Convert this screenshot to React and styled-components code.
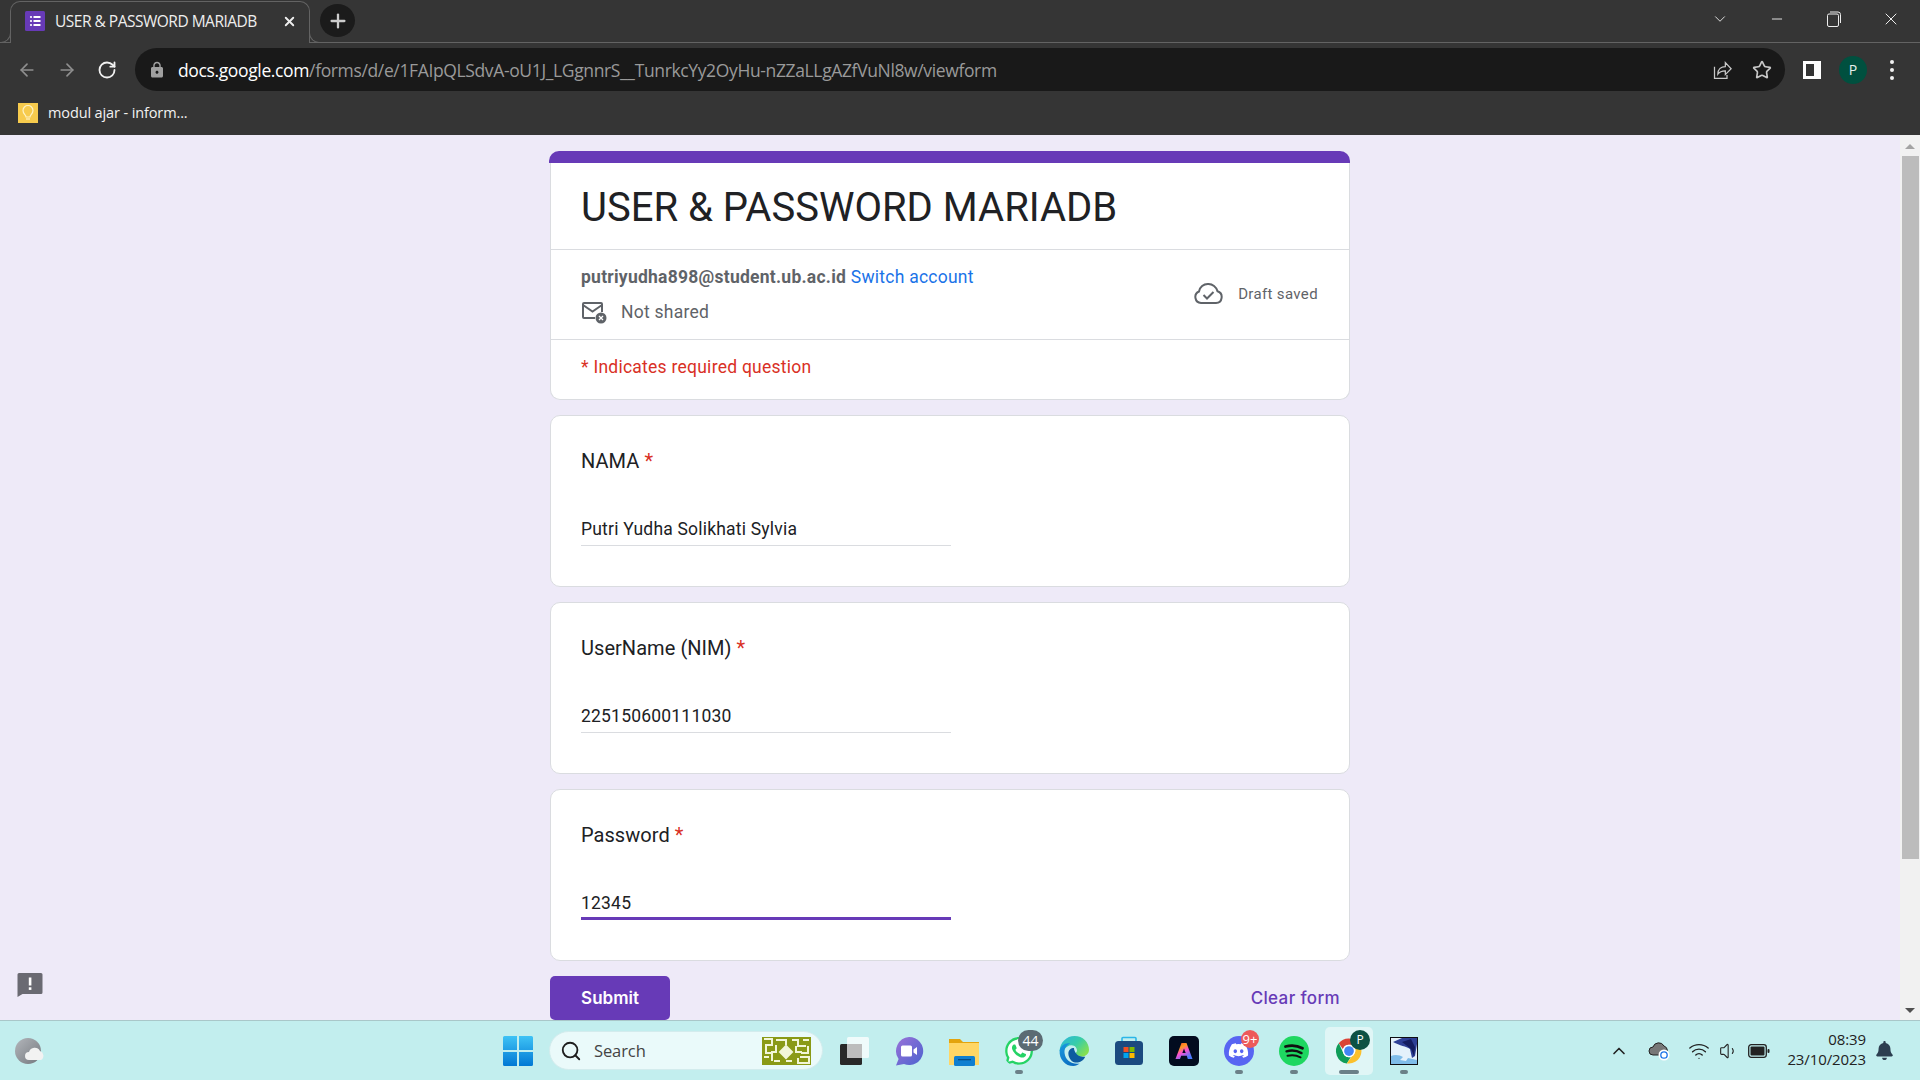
import React from "react";
import styled, { createGlobalStyle } from "styled-components";
import { ArrowLeft, ArrowRight, RotateCw, Star, ChevronDown, ChevronUp, Minus, X, Plus, Wifi, Volume1, Search } from "lucide-react";
import { MdLock } from "react-icons/md";
import { FaWhatsapp, FaDiscord, FaBell } from "react-icons/fa";

const GlobalStyle = createGlobalStyle`
  html, body { margin: 0; padding: 0; height: 100%; overflow: hidden; }
  #root { height: 100%; }
  * { box-sizing: border-box; }
`;

const UI = `"Open Sans", "Noto Sans", sans-serif`;
const FORM = `Roboto, "Liberation Sans", sans-serif`;

const Screen = styled.div`
  width: 1920px; height: 1080px; display: flex; flex-direction: column; overflow: hidden;
  font-family: ${FORM};
`;

/* ---------- browser chrome ---------- */
const Browser = styled.header`
  background: #353535; color: #fff; height: 135px; flex: none; display: flex; flex-direction: column;
  font-family: ${UI};
`;
const TabStrip = styled.div`
  height: 43px; flex: none; display: flex; align-items: flex-start; padding: 1px 0 0 10px;
  border-bottom: 1px solid #636363;
`;
const Tab = styled.div`
  position: relative; width: 300px; height: 42px; flex: none; display: flex; align-items: center;
  padding: 0 12px 3px 14px; background: #353535; border: 1px solid #636363; border-bottom: none;
  border-radius: 10px 10px 0 0;
  &::before, &::after {
    content: ""; position: absolute; bottom: 0; width: 10px; height: 10px; border-bottom: 1px solid #636363;
  }
  &::before { left: -11px; border-right: 1px solid #636363; border-bottom-right-radius: 10px; }
  &::after { right: -11px; border-left: 1px solid #636363; border-bottom-left-radius: 10px; }
`;
const Favicon = styled.svg`width: 20px; height: 20px; flex: none; margin-right: 10px;`;
const TabTitle = styled.span`
  flex: 1; font-size: 15.5px; letter-spacing: -0.5px; white-space: nowrap; color: #eee;
`;
const TabClose = styled(X)`width: 15px; height: 15px; color: #eee;`;
const NewTab = styled.div`
  width: 35px; height: 33px; margin: 3px 0 0 10px; border-radius: 50%; background: #1b1b1b;
  display: flex; align-items: center; justify-content: center; color: #ccc;
`;
const WindowControls = styled.div`
  margin-left: auto; display: flex; align-items: center; height: 36px; color: #eee; padding-right: 1px;
`;
const WindowButton = styled.div`
  width: ${p => p.$w || 57}px; display: flex; justify-content: center;
`;
const RestoreIcon = styled.svg`width: 14px; height: 16px;`;

const Toolbar = styled.div`
  height: 49px; flex: none; display: flex; align-items: center; padding: 4px 0 0 7px;
`;
const NavBtn = styled.div`
  width: 40px; display: flex; justify-content: center; color: ${p => (p.$on ? "#f1f1f1" : "#8f8f8f")};
`;
const Omnibox = styled.div`
  width: 1650px; height: 43px; margin-left: 8px; flex: none; background: #191919; border-radius: 22px;
  display: flex; align-items: center; padding: 0 13px 0 13px;
`;
const LockIcon = styled(MdLock)`width: 18px; height: 18px; color: #a0a0a0; margin-right: 12px;`;
const Url = styled.div`
  font-size: 17.5px; letter-spacing: -0.365px; white-space: nowrap; color: #9a9a9a; flex: 1;
  b { color: #fff; font-weight: 400; }
`;
const OmniIcons = styled.div`display: flex; align-items: center; gap: 20px; color: #c8c8c8;`;
const ToolRight = styled.div`display: flex; align-items: center; flex: 1; padding-left: 18px; gap: 0;`;
const SidePanel = styled.div`
  width: 18px; height: 18px; background: #fff; border: 3px solid #fff; border-right-width: 7px;
  box-shadow: inset 0 0 0 6px #353535;
`;
const Avatar = styled.div`
  width: 28px; height: 28px; border-radius: 50%; background: #00503f; color: #e8f0ee; margin-left: 18px;
  display: flex; align-items: center; justify-content: center; font-size: 14px;
`;
const Kebab = styled.div`
  display: flex; flex-direction: column; gap: 4px; margin-left: 23px;
  i { width: 4px; height: 4px; background: #f1f1f1; border-radius: 50%; display: block; }
`;
const Bookmarks = styled.div`
  flex: 1; display: flex; align-items: center; padding: 0 0 2px 18px; gap: 10px; font-size: 14.5px;
  letter-spacing: -0.12px; color: #f2f2f2;
`;
const BookmarkIcon = styled.div`
  width: 20px; height: 20px; background: #f7cb4d; display: flex; align-items: center; justify-content: center;
`;

/* ---------- page ---------- */
const Viewport = styled.main`
  position: relative; flex: 1; min-height: 0; display: flex; overflow: hidden; background: #eeeaf8;
`;
const Page = styled.div`
  flex: 1; overflow: hidden; display: flex; flex-direction: column; align-items: center; padding-top: 16px;
`;
const Column = styled.div`width: 800px; display: flex; flex-direction: column; gap: 15px; flex: none;`;
const HeaderCard = styled.section`
  background: #fff; border-radius: 10px; border: 1px solid #dadce0; border-top: none;
`;
const Accent = styled.div`height: 12px; background: #673ab7; margin: 0 -1px 0 -2px; border-radius: 10px 10px 0 0;`;
const TitleBlock = styled.div`padding: 20px 30px 16px; border-bottom: 1px solid #dadce0; height: 87px;`;
const FormTitle = styled.h1`
  margin: 0; font-size: 40px; line-height: 50px; font-weight: 400; color: #202124;
`;
const AccountBlock = styled.div`
  height: 90px; padding: 0 30px; border-bottom: 1px solid #dadce0; display: flex; align-items: center;
  justify-content: space-between;
`;
const AccountInfo = styled.div`
  display: flex; flex-direction: column; gap: 10px; font-size: 17.5px; color: #5f6368; letter-spacing: .25px;
`;
const Email = styled.div`
  line-height: 25px; b { font-weight: 700; color: #5f6368; } a { color: #1a73e8; text-decoration: none; }
`;
const NotShared = styled.div`display: flex; align-items: center; gap: 14px; line-height: 25px;`;
const MailIcon = styled.svg`width: 26px; height: 24px; flex: none;`;
const Draft = styled.div`
  display: flex; align-items: center; gap: 15px; font-size: 15px; color: #5f6368; padding: 0 1px 2px 0; letter-spacing: .35px;
`;
const CloudIcon = styled.svg`width: 30px; height: 21px; flex: none;`;
const RequiredNote = styled.div`
  height: 59px; padding: 15px 30px 0; font-size: 17.5px; line-height: 25px; color: #d93025; letter-spacing: .25px;
`;
const QuestionCard = styled.section`
  height: 172px; background: #fff; border: 1px solid #dadce0; border-radius: 10px; padding: 30px 30px 0;
`;
const Question = styled.div`
  font-size: 20px; line-height: 30px; color: #202124; letter-spacing: .05px;
  span { color: #d93025; margin-left: 5px; }
`;
const Answer = styled.div`
  margin-top: 35px; width: 370px; height: 35px; padding-top: 5px;
  font-size: 17.5px; line-height: 26px; color: #202124; letter-spacing: .2px;
  border-bottom: ${p => (p.$active ? "3px solid #673ab7" : "1.5px solid #dadce0")};
`;
const FormActions = styled.div`
  display: flex; justify-content: space-between; align-items: center; padding-right: 10px; height: 44px;
`;
const SubmitButton = styled.button`
  width: 120px; height: 44px; border: none; border-radius: 5px; background: #673ab7; color: #fff;
  font: 600 17px Inter, ${FORM}; padding: 0;
`;
const ClearLink = styled.a`color: #673ab7; font: 500 17px Inter, ${FORM}; letter-spacing: .35px;`;
const FeedbackIcon = styled.svg`position: absolute; left: 17px; bottom: 22px; width: 26px; height: 26px;`;

const Scrollbar = styled.aside`
  width: 20px; flex: none; background: #f1f1f1; display: flex; flex-direction: column; align-items: center;
  justify-content: space-between; padding: 9px 0 7px;
`;
const ScrollTop = styled.div`display: flex; flex-direction: column; align-items: center; gap: 7px;`;
const ArrowUp = styled.div`
  width: 0; height: 0; border-left: 5px solid transparent; border-right: 5px solid transparent;
  border-bottom: 5px solid #a3a3a3;
`;
const ArrowDown = styled.div`
  width: 0; height: 0; border-left: 5px solid transparent; border-right: 5px solid transparent;
  border-top: 5px solid #505050;
`;
const Thumb = styled.div`width: 17px; height: 703px; background: #bcbcbc;`;

/* ---------- taskbar ---------- */
const Taskbar = styled.footer`
  height: 60px; flex: none; background: #c2eeee; border-top: 1px solid #a9c7c9; display: flex; align-items: center;
  padding-left: 15px; font-family: ${UI}; position: relative;
`;
const Weather = styled.svg`width: 30px; height: 30px; flex: none;`;
const StartLogo = styled.svg`width: 30px; height: 30px; flex: none; margin-left: 458px;`;
const SearchPill = styled.div`
  width: 274px; height: 39px; margin: 0 3px 0 16px; flex: none; border-radius: 20px; background: #eafafa;
  border: 1px solid #d3eced; display: flex; align-items: center; padding: 0 10px 0 10px; color: #444;
  font-size: 16.5px; gap: 12px; letter-spacing: -.1px;
`;
const SearchGlyph = styled(Search)`width: 22px; height: 22px; color: #1e1e1e;`;
const SearchText = styled.span`flex: 1;`;
const Doodle = styled.svg`width: 49px; height: 28px; flex: none; margin-right: 1px;`;
const Cell = styled.div`
  position: relative; width: 55px; height: 58px; flex: none; display: flex; align-items: center; justify-content: center;
`;
const ActiveBack = styled.div`
  position: absolute; left: 4px; top: 5px; width: 48px; height: 48px; border-radius: 5px; background: #e0f6f6;
`;
const Run = styled.div`
  position: absolute; bottom: 6px; left: 50%; transform: translateX(-50%); height: 4px; border-radius: 2px;
  width: ${p => (p.$wide ? 20 : 8)}px; background: #6b8088;
`;
const Badge = styled.div`
  position: absolute; top: ${p => p.$t}px; left: ${p => p.$l}px; height: ${p => p.$s}px; min-width: ${p => p.$w}px;
  border-radius: ${p => p.$s}px; background: ${p => p.$c}; color: #fff; font-size: ${p => p.$f}px; line-height: ${p => p.$s}px;
  text-align: center;
`;
const Tray = styled.div`
  margin-left: auto; display: flex; align-items: center; height: 100%; color: #222; padding-right: 27px;
`;
const TrayItem = styled.div`
  width: ${p => p.$w}px; display: flex; justify-content: center; flex: none;
`;
const Clock = styled.div`
  width: 87px; margin-top: -3px; flex: none; text-align: right; font-size: 15px; line-height: 20px; color: #222; letter-spacing: -.1px; white-space: nowrap;
`;
const Bell = styled(FaBell)`width: 17px; height: 19px; color: #2c3e50; margin-left: 10px;`;

const Svg30 = styled.svg`width: 30px; height: 30px; position: relative;`;
const Brand = styled.div`
  position: relative; width: 30px; height: 30px; border-radius: ${p => p.$r || "50%"}; background: ${p => p.$bg};
  display: flex; align-items: center; justify-content: center; color: #fff;
`;
const WhatsOuter = styled(FaWhatsapp)`width: 32px; height: 32px; color: #25d366; background: radial-gradient(circle, #fff 60%, transparent 62%); border-radius: 50%;`;

const questions = [
  { label: "NAMA", value: "Putri Yudha Solikhati Sylvia" },
  { label: "UserName (NIM)", value: "225150600111030" },
  { label: "Password", value: "12345", active: true },
];

const Forms = () => (
  <Favicon viewBox="0 0 20 20">
    <rect width="20" height="20" rx="1.5" fill="#673ab7" />
    {[6, 10, 14].map(y => (
      <g key={y} fill="#fff"><circle cx="6" cy={y} r="1.1" /><rect x="8.5" y={y - 1} width="7" height="2" /></g>
    ))}
  </Favicon>
);

const ShareIcon = () => (
  <svg width="20" height="20" viewBox="0 0 24 24" fill="none" stroke="#c8c8c8" strokeWidth="1.5">
    <path d="M3 8v14h15v-4" /><path d="M7 17c0-6 4-9 9-9V3l7 7.5-7 7V13c-4 0-7 1-9 4z" />
  </svg>
);

const Chrome = () => (
  <Svg30 viewBox="0 0 48 48">
    <path d="M24 4a20 20 0 0 1 17.3 10H24a10 10 0 0 0-9.6 7L7.6 11.6A20 20 0 0 1 24 4z" fill="#db4437" />
    <path d="M7.6 11.6 16.2 30a10 10 0 0 0 10.6 3.6L20.500 44A20 20 0 0 1 7.600 11.600z" fill="#0f9d58" />
    <path d="M41.300 14A20 20 0 0 1 24 44h-3.500l8.800-13a10 10 0 0 0 .7-17z" fill="#fbc02d" />
    <circle cx="24" cy="24" r="10" fill="#fff" /><circle cx="24" cy="24" r="7.800" fill="#4285f4" />
  </Svg30>
);

const Edge = () => (
  <Svg30 viewBox="0 0 48 48">
    <defs>
      <linearGradient id="e1" x1="0" y1="0" x2="1" y2=".7"><stop offset="0" stopColor="#2bb4e0" /><stop offset=".55" stopColor="#38cda8" /><stop offset="1" stopColor="#86e04f" /></linearGradient>
      <linearGradient id="e2" x1="0" y1="0" x2=".6" y2="1"><stop offset="0" stopColor="#1a9be0" /><stop offset="1" stopColor="#0b6cc0" /></linearGradient>
    </defs>
    <path d="M1 23C2 10 12 0 25 0c13 0 23 10 23 22 0 7-6 11-12 11-5 0-10-2-11-5 3-1 5-4 3-8-2-5-9-7-15-3S2 27 1 23z" fill="url(#e1)" />
    <path d="M1 23c2-8 9-13 17-11-7 3-10 9-9 16 1 10 11 18 24 16-3 2-6 4-10 4C10 48 0 37 1 23z" fill="url(#e2)" />
    <path d="M15 28c0-6 4-9 9-9 0 6 5 13 13 14l5 0c-3 7-11 11-18 9-5-2-9-8-9-14z" fill="#0d5aa0" />
  </Svg30>
);

const Spotify = () => (
  <Svg30 viewBox="0 0 30 30" fill="none" stroke="#111" strokeLinecap="round">
    <circle cx="15" cy="15" r="15" fill="#1ed760" stroke="none" />
    <path d="M6.500 10.500c6-1.700 12-1 17 1.800" strokeWidth="2.800" />
    <path d="M7.500 15.300c5-1.300 10.500-.8 15 1.800" strokeWidth="2.400" />
    <path d="M8.500 19.800c4.500-1 9-.6 13 1.500" strokeWidth="2" />
  </Svg30>
);

const Store = () => (
  <Svg30 viewBox="0 0 30 30">
    <path d="M8 5V2.500a1 1 0 0 1 1-1h12a1 1 0 0 1 1 1V5" fill="none" stroke="#2bb6e8" strokeWidth="1.600" />
    <rect x="1" y="5" width="28" height="24" rx="3.500" fill="#1b4a7f" />
    <rect x="9.500" y="11" width="5" height="5" fill="#f25022" /><rect x="15.500" y="11" width="5" height="5" fill="#7fba00" />
    <rect x="9.500" y="17" width="5" height="5" fill="#00a4ef" /><rect x="15.500" y="17" width="5" height="5" fill="#ffb900" />
  </Svg30>
);

const AdobeExpress = () => (
  <Svg30 viewBox="0 0 30 30">
    <defs>
      <linearGradient id="ax" x1="0" y1="0" x2=".6" y2="1"><stop offset="0" stopColor="#ff3a30" /><stop offset=".35" stopColor="#ff9a1f" /><stop offset=".6" stopColor="#ff4fd0" /><stop offset="1" stopColor="#4a7cff" /></linearGradient>
    </defs>
    <rect width="30" height="30" rx="5" fill="#020c1f" />
    <path d="M12.500 7h5L23.500 23h-4.700l-1-3.300h-5.600L11 23H6.500z" fill="url(#ax)" />
    <path d="M15 12.500l-1.700 4.500h3.400z" fill="#020c1f" />
  </Svg30>
);

const Folder = () => (
  <Svg30 viewBox="0 0 30 30">
    <path d="M0 3h11l3 3h16v23H0z" fill="#e3a40e" />
    <rect y="7" width="30" height="22" fill="#ffd665" />
    <rect x="5" y="20" width="21" height="10" rx="1.500" fill="#0f7fd0" />
    <rect x="9" y="23" width="13" height="1.300" fill="#064c86" />
  </Svg30>
);

const TaskView = () => (
  <Svg30 viewBox="0 0 30 30">
    <rect x="1" y="8" width="22" height="21" rx="1.500" fill="#282828" />
    <rect x="8" y="1" width="22" height="21" rx="1.500" fill="#fff" fillOpacity=".75" />
    <rect x="8" y="8" width="15" height="14" fill="#bdbdbd" />
  </Svg30>
);

const Meet = () => (
  <Svg30 viewBox="0 0 30 30">
    <defs>
      <linearGradient id="mt" x1="0" y1="0" x2="1" y2="1"><stop offset="0" stopColor="#9a72d8" /><stop offset="1" stopColor="#4b62cf" /></linearGradient>
    </defs>
    <path d="M15 1a14 14 0 1 1-5 27l-8 1.500 2.600-6.500A14 14 0 0 1 15 1z" fill="url(#mt)" />
    <rect x="7" y="9.500" width="11" height="11" rx="1.500" fill="#fff" />
    <path d="M19.500 13.500l3.500-2.500v8l-3.500-2.500z" fill="#fff" />
  </Svg30>
);

const Paint = () => (
  <Svg30 viewBox="0 0 30 30">
    <rect x="1" y="1" width="28" height="28" fill="#0d0d12" />
    <rect x="2" y="2" width="26" height="26" fill="#e4f1fb" />
    <path d="M4 6l9-4h15v6l-2 12-3 2-2-9c-4-3-10-3-17-7z" fill="#2e3f96" />
    <path d="M13 6l9-3 4 8-1 9-3-7z" fill="#141c60" />
    <path d="M2 20c4-2 9-1 12 1l-3 3 6 1 2-3 9 2v4H2z" fill="#7fbce9" />
  </Svg30>
);

const Icons = [
  { node: <TaskView /> },
  { node: <Meet /> },
  { node: <Folder /> },
  { node: <WhatsOuter />, run: true, badge: { t: 8, l: 27, s: 21, w: 25, c: "#5b6b73", f: 14, text: "44" } },
  { node: <Edge /> },
  { node: <Store /> },
  { node: <AdobeExpress /> },
  { node: <Brand $bg="#5865f2"><FaDiscord size={21} /></Brand>, run: true, badge: { t: 8, l: 30, s: 18, w: 18, c: "#ed5a5a", f: 13, text: "9+" } },
  { node: <Spotify />, run: true },
  { node: <Chrome />, run: true, wide: true, active: true, badge: { t: 8, l: 29, s: 20, w: 20, c: "#0c5144", f: 12, text: "P" } },
  { node: <Paint />, run: true },
];

export default function App() {
  return (
    <Screen>
      <GlobalStyle />
      <Browser>
        <TabStrip>
          <Tab>
            <Forms />
            <TabTitle>USER &amp; PASSWORD MARIADB</TabTitle>
            <TabClose strokeWidth={3} />
          </Tab>
          <NewTab><Plus size={22} strokeWidth={2.5} /></NewTab>
          <WindowControls>
            <WindowButton><ChevronDown size={18} strokeWidth={1.2} /></WindowButton>
            <WindowButton><Minus size={16} strokeWidth={1.4} /></WindowButton>
            <WindowButton>
              <RestoreIcon viewBox="0 0 14 16" fill="none" stroke="#eee" strokeWidth="1">
                <rect x=".5" y="3" width="11" height="12.500" rx="1.500" /><path d="M3 1h8a2.500 2.500 0 0 1 2.500 2.500V12" />
              </RestoreIcon>
            </WindowButton>
            <WindowButton><X size={20} strokeWidth={1.2} /></WindowButton>
          </WindowControls>
        </TabStrip>
        <Toolbar>
          <NavBtn><ArrowLeft size={20} /></NavBtn>
          <NavBtn><ArrowRight size={20} /></NavBtn>
          <NavBtn $on><RotateCw size={20} strokeWidth={2.2} /></NavBtn>
          <Omnibox>
            <LockIcon />
            <Url><b>docs.google.com</b>/forms/d/e/1FAIpQLSdvA-oU1J_LGgnnrS__TunrkcYy2OyHu-nZZaLLgAZfVuNl8w/viewform</Url>
            <OmniIcons>
              <ShareIcon />
              <Star size={20} strokeWidth={2} />
            </OmniIcons>
          </Omnibox>
          <ToolRight>
            <SidePanel />
            <Avatar>P</Avatar>
            <Kebab><i /><i /><i /></Kebab>
          </ToolRight>
        </Toolbar>
        <Bookmarks>
          <BookmarkIcon>
            <svg width="14" height="16" viewBox="0 0 14 16" fill="none" stroke="#fff3c4" strokeWidth="1.200">
              <path d="M5 12c0-2-3-3-3-6.500a5 5 0 0 1 10 0C12 9 9 10 9 12z" /><path d="M5 14h4" />
            </svg>
          </BookmarkIcon>
          modul ajar - inform...
        </Bookmarks>
      </Browser>

      <Viewport>
        <Page>
          <Column>
            <HeaderCard>
              <Accent />
              <TitleBlock><FormTitle>USER &amp; PASSWORD MARIADB</FormTitle></TitleBlock>
              <AccountBlock>
                <AccountInfo>
                  <Email><b>putriyudha898@student.ub.ac.id</b> <a href="#s">Switch account</a></Email>
                  <NotShared>
                    <MailIcon viewBox="0 0 26 24" fill="none" stroke="#5f6368" strokeWidth="2">
                      <path d="M14 18H3a1 1 0 0 1-1-1V4a1 1 0 0 1 1-1h17a1 1 0 0 1 1 1v8" />
                      <path d="M2 5l9.500 6.500L21 5" />
                      <circle cx="20" cy="18" r="5.500" fill="#5f6368" stroke="none" />
                      <path d="M18 16l4 4M22 16l-4 4" stroke="#fff" strokeWidth="1.300" />
                    </MailIcon>
                    Not shared
                  </NotShared>
                </AccountInfo>
                <Draft>
                  <CloudIcon viewBox="0 0 30 21" fill="none" stroke="#5f6368" strokeWidth="2">
                    <path d="M8 20h15a6 6 0 0 0 1.500-11.700A9.500 9.500 0 0 0 15 1a9 9 0 0 0-9 7.500A6 6 0 0 0 8 20z" />
                    <path d="M10.500 12l3.500 3.500 6.500-6.500" />
                  </CloudIcon>
                  Draft saved
                </Draft>
              </AccountBlock>
              <RequiredNote>* Indicates required question</RequiredNote>
            </HeaderCard>

            {questions.map(q => (
              <QuestionCard key={q.label}>
                <Question>{q.label}<span>*</span></Question>
                <Answer $active={q.active}>{q.value}</Answer>
              </QuestionCard>
            ))}

            <FormActions>
              <SubmitButton>Submit</SubmitButton>
              <ClearLink>Clear form</ClearLink>
            </FormActions>
          </Column>
        </Page>
        <FeedbackIcon viewBox="0 0 26 26">
          <path d="M2 1h22a1.500 1.500 0 0 1 1.500 1.500v18a1.500 1.500 0 0 1-1.500 1.500H5.500L0.500 25V2.500A1.500 1.500 0 0 1 2 1z" fill="#6a6a72" />
          <rect x="11.800" y="5.500" width="2.600" height="8" fill="#fff" /><rect x="11.800" y="15.300" width="2.600" height="2.600" fill="#fff" />
        </FeedbackIcon>
        <Scrollbar>
          <ScrollTop><ArrowUp /><Thumb /></ScrollTop>
          <ArrowDown />
        </Scrollbar>
      </Viewport>

      <Taskbar>
        <Weather viewBox="0 0 30 30">
          <defs><linearGradient id="wg" x1="0" y1="0" x2="1" y2="1"><stop offset="0" stopColor="#b3b6bb" /><stop offset="1" stopColor="#74787e" /></linearGradient></defs>
          <circle cx="13" cy="15" r="13" fill="url(#wg)" />
          <path d="M14 24a4 4 0 0 1 0-8 6 6 0 0 1 11-1 5 5 0 0 1 1 9z" fill="#f2f2f2" />
        </Weather>
        <StartLogo viewBox="0 0 30 30">
          <defs><linearGradient id="sl" x1="0" y1="0" x2="0" y2="1"><stop offset="0" stopColor="#3fc3f5" /><stop offset="1" stopColor="#0078d4" /></linearGradient></defs>
          <path d="M0 1.500A1.500 1.500 0 0 1 1.500 0H14v14H0zM16 0h12.500A1.500 1.500 0 0 1 30 1.500V14H16zM0 16h14v14H1.500A1.500 1.500 0 0 1 0 28.500zM16 16h14v12.500a1.500 1.500 0 0 1-1.500 1.500H16z" fill="url(#sl)" />
        </StartLogo>
        <SearchPill>
          <SearchGlyph strokeWidth={2} />
          <SearchText>Search</SearchText>
          <Doodle viewBox="0 0 49 28">
            <rect width="49" height="28" fill="#8a9a16" />
            <g fill="none" stroke="#f2f6d8" strokeWidth="2">
              <path d="M2 2h8v6H4v8h6v8M14 3h10v5M14 8v7h-5M30 3h6v6h8M41 3h6M46 9v7h-7M34 9v6h6M2 20h5M38 20h9v6H36v-5M30 24h-6M18 24h-6" />
              <path d="M24 9l6 6-6 6-6-6z" fill="#f2f6d8" />
            </g>
          </Doodle>
        </SearchPill>
        {Icons.map((ic, i) => (
          <Cell key={i}>
            {ic.active && <ActiveBack />}
            {ic.node}
            {ic.badge && <Badge $t={ic.badge.t} $l={ic.badge.l} $s={ic.badge.s} $w={ic.badge.w} $c={ic.badge.c} $f={ic.badge.f}>{ic.badge.text}</Badge>}
            {ic.run && <Run $wide={ic.wide} />}
          </Cell>
        ))}
        <Tray>
          <TrayItem $w={40}><ChevronUp size={20} /></TrayItem>
          <TrayItem $w={40}>
            <svg width="22" height="20" viewBox="0 0 22 20">
              <path d="M5 14a4 4 0 0 1 0-8 6 6 0 0 1 11-1 5 5 0 0 1 1 9z" fill="#777" stroke="#222" strokeWidth="1" />
              <circle cx="16" cy="14" r="5.500" fill="#fff" /><circle cx="16" cy="14" r="3.200" fill="none" stroke="#1a73e8" strokeWidth="1.300" />
            </svg>
          </TrayItem>
          <TrayItem $w={40}><Wifi size={22} strokeWidth={1.5} /></TrayItem>
          <TrayItem $w={20}><Volume1 size={20} strokeWidth={1.3} /></TrayItem>
          <TrayItem $w={40}>
            <svg width="22" height="14" viewBox="0 0 22 14">
              <rect x=".7" y=".7" width="17.600" height="12.600" rx="2.500" fill="none" stroke="#222" strokeWidth="1.300" />
              <rect x="2.500" y="2.500" width="14" height="9" rx="1" fill="#222" /><rect x="19.500" y="5" width="2" height="4" rx="1" fill="#222" />
            </svg>
          </TrayItem>
          <Clock>08:39<br />23/10/2023</Clock>
          <Bell />
        </Tray>
      </Taskbar>
    </Screen>
  );
}
